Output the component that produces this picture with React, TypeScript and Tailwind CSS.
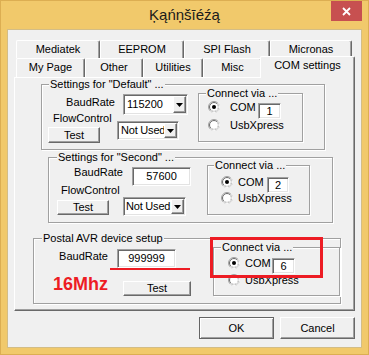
import React from "react";

const sunken =
  "border border-t-[#a0a0a0] border-l-[#a0a0a0] border-b-white border-r-white shadow-[inset_1px_1px_0_#696969,inset_-1px_-1px_0_#e3e3e3]";
const raised =
  "border border-t-white border-l-white border-b-[#696969] border-r-[#696969] shadow-[inset_-1px_-1px_0_#a0a0a0]";
const etched = "border border-[#a0a0a0] shadow-[1px_1px_0_#fff,inset_1px_1px_0_#fff]";

const Radio = ({ checked = false, className = "" }: { checked?: boolean; className?: string }) => (
  <svg width="12" height="12" viewBox="0 0 12 12" className={`shrink-0 ${className}`}>
    <circle cx="6" cy="6" r="5.5" fill="#fff" stroke="#a0a0a0" />
    <path d="M9.89 2.11A5.5 5.5 0 0 1 2.11 9.89" fill="none" stroke="#fff" />
    <circle cx="6" cy="6" r="4.5" fill="#fff" stroke="#696969" />
    <path d="M9.18 2.82A4.5 4.5 0 0 1 2.82 9.18" fill="none" stroke="#e3e3e3" />
    {checked && <circle cx="6" cy="6" r="2" fill="#000" />}
  </svg>
);

const Combo = ({ value, className, textClass = "pl-[2px]" }: { value: string; className: string; textClass?: string }) => (
  <div className={`flex bg-white p-[1px] ${sunken} ${className}`}>
    <div className={`flex-1 flex items-center whitespace-nowrap overflow-hidden ${textClass}`}>{value}</div>
    <div className={`w-[13px] bg-[#f0f0f0] flex items-center justify-center ${raised}`}>
      <svg width="7" height="4" viewBox="0 0 7 4">
        <polygon points="0,0 7,0 3.5,4" fill="#000" />
      </svg>
    </div>
  </div>
);

const TextBox = ({ children, className }: { children: React.ReactNode; className: string }) => (
  <div className={`bg-white flex items-center justify-center ${sunken} ${className}`}>{children}</div>
);

const Button = ({ children, className }: { children: React.ReactNode; className: string }) => (
  <div className={`bg-[#f0f0f0] flex items-center justify-center ${raised} ${className}`}>{children}</div>
);

const Legend = ({ children, className }: { children: React.ReactNode; className: string }) => (
  <span className={`absolute top-[-7px] px-[1px] bg-[#f0f0f0] whitespace-nowrap ${className}`}>{children}</span>
);

const Tab = ({ label, className }: { label: string; className: string }) => (
  <div
    className={`border-t border-l border-r border-t-white border-l-white border-r-[#696969] rounded-t-[2px] shadow-[inset_-1px_0_0_#a0a0a0] flex justify-center pt-[2px] ${className}`}
  >
    {label}
  </div>
);

export default function App() {
  return (
    <div className="w-[369px] h-[355px] bg-[#f1c96b] shadow-[inset_0_0_0_1px_#dcae52] flex flex-col font-['Liberation_Sans',Arial,sans-serif] text-[11px] leading-[13px] text-black">
      <div className="relative h-[30px] shrink-0 flex justify-center items-center">
        <span className="text-[15px] leading-[30px] text-[#1a1a1a]">Ķąńņšīéźą</span>
        <div className="absolute right-[7px] top-[1px] w-[31px] h-[20px] bg-[#c75050] flex items-center justify-center">
          <svg width="9" height="9" viewBox="0 0 9 9">
            <path d="M1 1L8 8M8 1L1 8" stroke="#fff" strokeWidth="1.8" />
          </svg>
        </div>
      </div>

      <div className="mx-[8px] h-[317px] bg-[#f0f0f0] shadow-[0_0_0_1px_#d3bd86] flex flex-col pl-[6px] pt-[10px]">
        <div className="flex ml-[2px] h-[18px]">
          <Tab label="Mediatek" className="w-[84px] h-[18px]" />
          <Tab label="EEPROM" className="w-[84px] h-[18px]" />
          <Tab label="SPI Flash" className="w-[86px] h-[18px]" />
          <Tab label="Micronas" className="w-[82px] h-[18px]" />
        </div>
        <div className="flex ml-[2px] h-[19px]">
          <Tab label="My Page" className="w-[69px] h-[19px]" />
          <Tab label="Other" className="w-[58px] h-[19px]" />
          <Tab label="Utilities" className="w-[60px] h-[19px]" />
          <Tab label="Misc" className="w-[59px] h-[19px]" />
          <Tab label="COM settings" className="relative z-10 w-[95px] h-[22px] -ml-[2px] -mt-[2px] bg-[#f0f0f0]" />
        </div>

        <div className="w-[341px] h-[234px] border border-t-white border-l-white border-b-[#696969] border-r-[#696969] shadow-[inset_-1px_-1px_0_#a0a0a0] flex flex-col">
          {/* Default */}
          <div className={`relative ml-[26px] mt-[6px] w-[284px] h-[66px] flex items-start ${etched}`}>
            <Legend className="left-[7px]">Settings for "Default" ...</Legend>
            <div className="ml-[6px] w-[67px] flex flex-col">
              <div className="mt-[11px] text-right">BaudRate</div>
              <div className="mt-[3px] pl-[5px]">FlowControl</div>
              <Button className="mt-[2px] w-[52px] h-[16px]">Test</Button>
            </div>
            <div className="ml-[2px] w-[71px] flex flex-col">
              <Combo value="115200" className="ml-[6px] mt-[9px] w-[65px] h-[21px]" />
              <Combo value="Not Used" textClass="pl-[2px] tracking-[-0.2px]" className="mt-[6px] w-[62px] h-[19px]" />
            </div>
            <div className={`relative ml-[10px] mt-[8px] w-[105px] h-[49px] ${etched}`}>
              <Legend className="left-[7px]">Connect via ...</Legend>
              <div className="flex items-start pl-[9px]">
                <Radio checked className="mt-[7px]" />
                <span className="ml-[10px] mt-[7px] w-[28px]">COM</span>
                <TextBox className="mt-[9px] w-[23px] h-[16px]">1</TextBox>
              </div>
              <div className="flex items-start pl-[9px]">
                <Radio />
                <span className="ml-[10px]">UsbXpress</span>
              </div>
            </div>
          </div>

          {/* Second */}
          <div className={`relative ml-[33px] mt-[7px] w-[285px] h-[66px] flex items-start ${etched}`}>
            <Legend className="left-[8px]">Settings for "Second" ...</Legend>
            <div className="ml-[8px] w-[66px] flex flex-col">
              <div className="mt-[8px] text-right">BaudRate</div>
              <div className="mt-[5px] pl-[4px]">FlowControl</div>
              <Button className="mt-[3px] w-[52px] h-[15px]">Test</Button>
            </div>
            <div className="flex flex-col">
              <TextBox className="ml-[9px] mt-[9px] w-[59px] h-[19px]">57600</TextBox>
              <Combo value="Not Used" textClass="pl-[1px] tracking-[-0.2px]" className="mt-[11px] w-[63px] h-[19px]" />
            </div>
            <div className={`relative ml-[16px] mt-[7px] w-[103px] h-[50px] ${etched}`}>
              <Legend className="left-[6px]">Connect via ...</Legend>
              <div className="flex items-start pl-[13px]">
                <Radio checked className="mt-[10px]" />
                <span className="ml-[5px] mt-[10px] w-[29px]">COM</span>
                <TextBox className="mt-[11px] w-[22px] h-[16px]">2</TextBox>
              </div>
              <div className="flex items-start pl-[13px] -mt-[1px]">
                <Radio />
                <span className="ml-[5px]">UsbXpress</span>
              </div>
            </div>
          </div>

          {/* Postal AVR */}
          <div className={`relative ml-[18px] mt-[15px] w-[308px] h-[66px] flex items-start ${etched}`}>
            <Legend className="left-[8px]">Postal AVR device setup</Legend>
            <div className="ml-[19px] w-[55px] flex flex-col">
              <div className="mt-[11px] text-right">BaudRate</div>
              <div className="mt-[11px] text-[18px] leading-[20px] font-bold text-[#ed1c24] whitespace-nowrap">16Mhz</div>
            </div>
            <div className="flex flex-col">
              <TextBox className="ml-[9px] mt-[10px] w-[59px] h-[19px]">999999</TextBox>
              <Button className="ml-[15px] mt-[13px] w-[68px] h-[15px]">Test</Button>
            </div>
            <div className={`relative ml-[22px] mt-[8px] w-[127px] h-[49px] ${etched}`}>
              <Legend className="left-[7px]">Connect via ...</Legend>
              <div className="flex items-start pl-[14px]">
                <Radio checked className="mt-[9px]" />
                <span className="ml-[5px] mt-[9px] w-[27px]">COM</span>
                <TextBox className="mt-[10px] w-[23px] h-[16px]">6</TextBox>
              </div>
              <div className="flex items-start pl-[14px]">
                <Radio />
                <span className="ml-[5px]">UsbXpress</span>
              </div>
            </div>
            <div className="absolute left-[176px] top-[-2px] w-[113px] h-[41px] border-[3px] border-[#ed1c24]" />
            <div className="absolute left-[76px] top-[29px] w-[80px] h-[2px] bg-[#ed1c24]" />
          </div>
        </div>

        <div className="mt-[6px] ml-[185px] flex gap-[6px]">
          <div className="w-[75px] h-[22px] bg-[#f0f0f0] border border-[#646464] shadow-[inset_1px_1px_0_#fff,inset_-1px_-1px_0_#a0a0a0] flex items-center justify-center">
            OK
          </div>
          <Button className="w-[75px] h-[22px]">Cancel</Button>
        </div>
      </div>
    </div>
  );
}
